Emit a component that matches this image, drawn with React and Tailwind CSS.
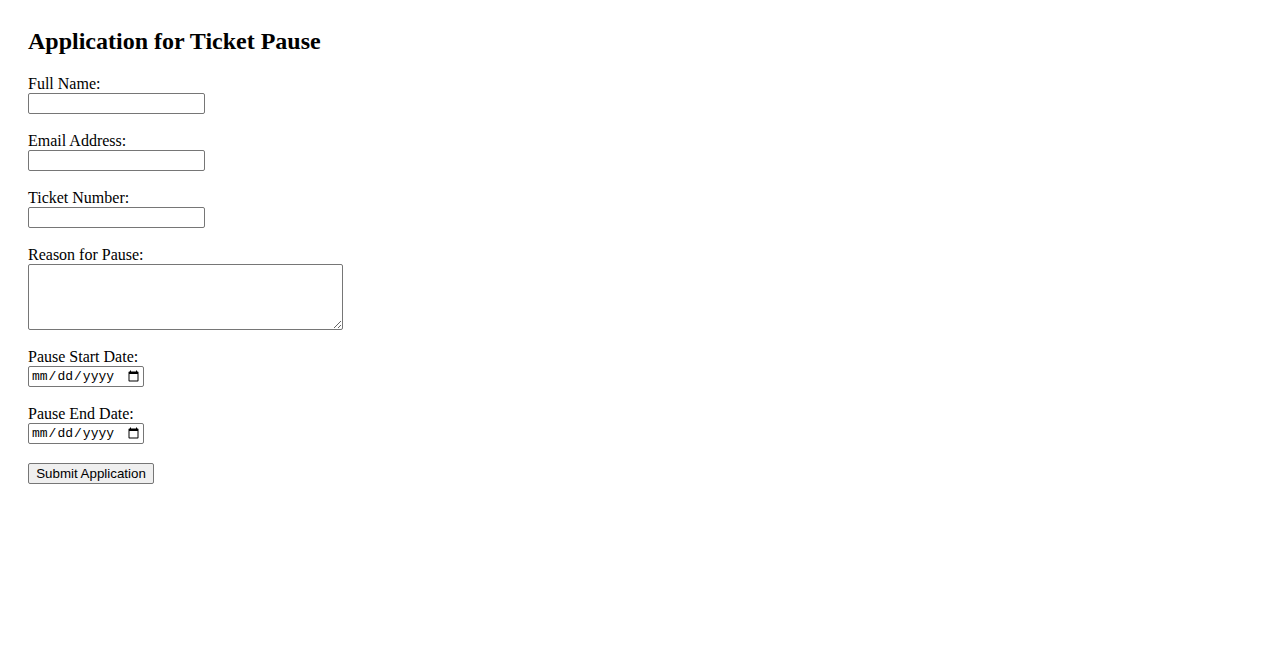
import React from "react";

const serif = { fontFamily: '"Liberation Serif", "Times New Roman", serif' };

function Field({ label, children, last }) {
  return (
    <div className={last ? "" : "mb-[18px]"}>
      <label className="block h-[18px] text-[16px] leading-[18px] text-black">{label}</label>
      {children}
    </div>
  );
}

const textInput =
  "block w-[177px] h-[21px] px-[2px] py-[1px] border border-[#767676] rounded-[2px] bg-white text-[13px] font-['Liberation_Sans',Arial,sans-serif]";

const dateInput =
  "block w-[116px] h-[21px] pl-[2px] pr-[1px] border border-[#767676] rounded-[2px] bg-white text-[13px] leading-[17px] text-black font-['Liberation_Mono',monospace]";

export default function App() {
  return (
    <div className="min-h-[650px] bg-white px-[28px] pt-[27px]" style={serif}>
      <h2 className="text-[24px] leading-[28px] font-bold text-black mb-[20px]">Application for Ticket Pause</h2>
      <form onSubmit={(e) => e.preventDefault()} className="flex flex-col items-start">
        <Field label="Full Name:">
          <input type="text" name="fullName" className={textInput} />
        </Field>
        <Field label="Email Address:">
          <input type="email" name="email" className={textInput} />
        </Field>
        <Field label="Ticket Number:">
          <input type="text" name="ticketNumber" className={textInput} />
        </Field>
        <Field label="Reason for Pause:">
          <textarea
            name="reason"
            className="block w-[315px] h-[66px] px-[2px] py-[2px] border border-[#767676] rounded-[2px] bg-white text-[13px] font-['Liberation_Mono',monospace] resize"
          />
        </Field>
        <Field label="Pause Start Date:">
          <input type="date" name="startDate" className={dateInput} />
        </Field>
        <Field label="Pause End Date:">
          <input type="date" name="endDate" className={dateInput} />
        </Field>
        <div className="h-px" />
        <button
          type="submit"
          className="w-[126px] h-[21px] border border-[#767676] rounded-[2px] bg-[#efefef] text-[13.33px] leading-[17px] text-black font-['Liberation_Sans',Arial,sans-serif]"
        >
          Submit Application
        </button>
      </form>
    </div>
  );
}
